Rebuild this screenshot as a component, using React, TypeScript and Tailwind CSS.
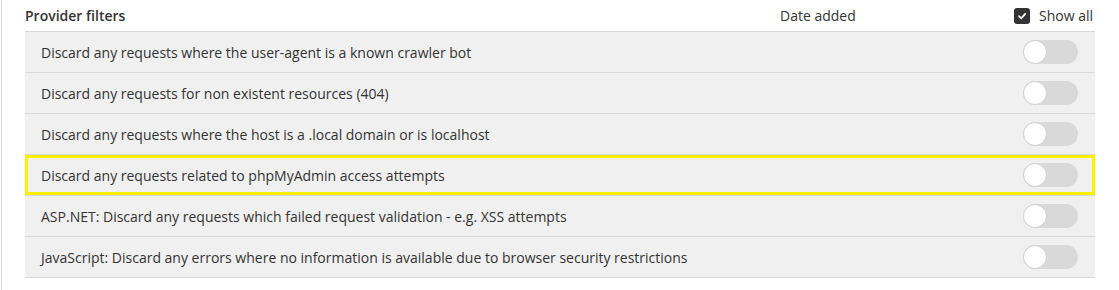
import React from "react";

const rows = [
  "Discard any requests where the user-agent is a known crawler bot",
  "Discard any requests for non existent resources (404)",
  "Discard any requests where the host is a .local domain or is localhost",
  "Discard any requests related to phpMyAdmin access attempts",
  "ASP.NET: Discard any requests which failed request validation - e.g. XSS attempts",
  "JavaScript: Discard any errors where no information is available due to browser security restrictions",
];

function Toggle() {
  return (
    <div className="relative h-[24px] w-[55px] rounded-full bg-[#d9d9d9]">
      <div className="absolute left-0 top-0 h-[24px] w-[24px] rounded-full border border-[#d0d0d0] bg-white" />
    </div>
  );
}

export default function App() {
  return (
    <div
      className="h-[290px] w-[1119px] bg-white text-[14px] text-[#333]"
      style={{ fontFamily: '"Open Sans", "Noto Sans", sans-serif' }}
    >
      <div className="ml-px h-full border-l border-[#dcdcdc] pl-[23px] pr-[24px]">
        <div className="flex h-[31px] items-center">
          <div className="flex-1 font-semibold">Provider filters</div>
          <div className="w-[234px]">Date added</div>
          <div className="flex w-[81px] items-center gap-[9px]">
            <span className="flex h-[16px] w-[16px] items-center justify-center rounded-[3px] bg-[#333]">
              <svg width="10" height="10" viewBox="0 0 10 10" fill="none">
                <path d="M2 5.2 L4.2 7.3 L8.2 2.8" stroke="white" strokeWidth="1.8" strokeLinecap="round" strokeLinejoin="round" />
              </svg>
            </span>
            <span>Show all</span>
          </div>
        </div>
        <div className="border-b border-[#d9d9d9]">
          {rows.map((r, i) => (
            <div key={i} className="border-t border-[#d9d9d9] bg-[#f0f0f0]">
              <div
                className={
                  i === 3
                    ? "flex h-[40px] items-center border-[3px] border-[#fff000] pl-[13px] pr-[14px]"
                    : "flex h-[40px] items-center pl-[16px] pr-[17px]"
                }
              >
                <div className="flex-1">{r}</div>
                <Toggle />
              </div>
            </div>
          ))}
        </div>
      </div>
    </div>
  );
}
